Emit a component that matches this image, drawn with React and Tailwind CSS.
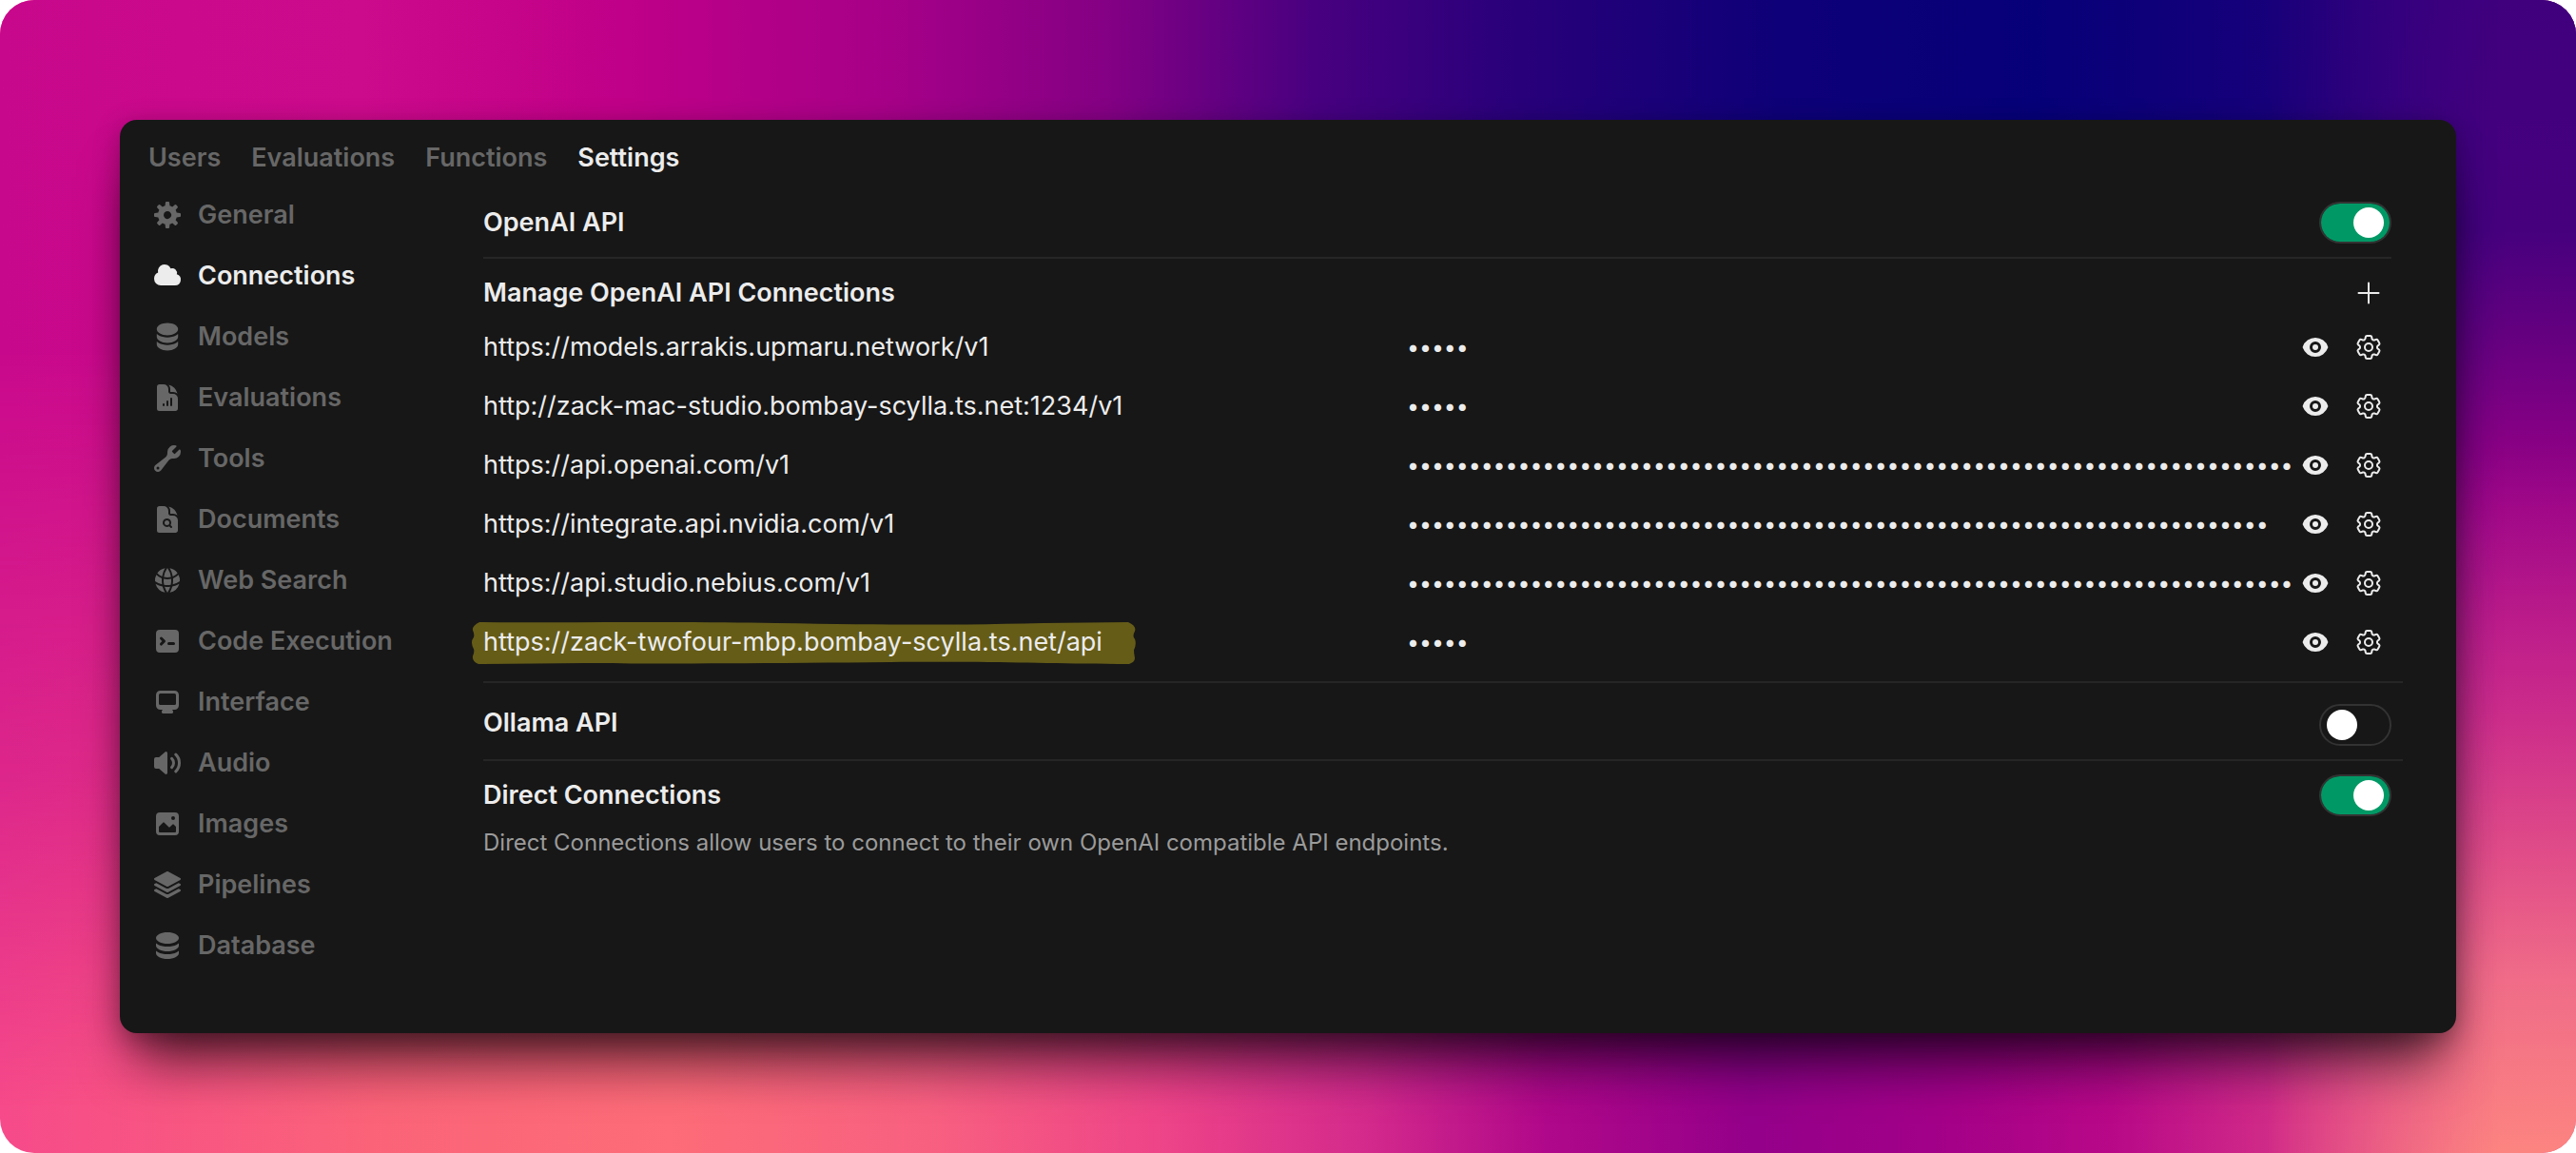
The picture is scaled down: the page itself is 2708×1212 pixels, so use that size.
import React from "react";

function Icon({ children, box = "0 0 24 24", className = "size-8" }) {
  return (
    <svg viewBox={box} fill="currentColor" className={className} aria-hidden="true">
      {children}
    </svg>
  );
}

const CogIcon = () => (
  <Icon box="0 0 16 16">
    <path
      fillRule="evenodd"
      clipRule="evenodd"
      d="M6.955 1.45A.5.5 0 0 1 7.452 1h1.096a.5.5 0 0 1 .497.45l.17 1.699c.484.12.94.312 1.356.562l1.321-1.081a.5.5 0 0 1 .67.033l.774.775a.5.5 0 0 1 .034.67l-1.08 1.32c.25.417.44.873.561 1.357l1.699.17a.5.5 0 0 1 .45.497v1.096a.5.5 0 0 1-.45.497l-1.699.17c-.12.484-.312.94-.562 1.356l1.082 1.322a.5.5 0 0 1-.034.67l-.774.774a.5.5 0 0 1-.67.033l-1.322-1.08c-.416.25-.872.44-1.356.561l-.17 1.699a.5.5 0 0 1-.497.45H7.452a.5.5 0 0 1-.497-.45l-.17-1.699a4.973 4.973 0 0 1-1.356-.562L4.108 13.37a.5.5 0 0 1-.67-.033l-.774-.775a.5.5 0 0 1-.034-.67l1.08-1.32a4.971 4.971 0 0 1-.561-1.357l-1.699-.17A.5.5 0 0 1 1 8.548V7.452a.5.5 0 0 1 .45-.497l1.699-.17c.12-.484.312-.94.562-1.356L2.629 4.107a.5.5 0 0 1 .034-.67l.774-.774a.5.5 0 0 1 .67-.033L5.43 3.71a4.97 4.97 0 0 1 1.356-.561l.17-1.699ZM6 8c0 .538.212 1.026.558 1.385l.057.057a2 2 0 0 0 2.828-2.828l-.058-.056A2 2 0 0 0 6 8Z"
    />
  </Icon>
);

const CloudIcon = () => (
  <Icon box="0 0 16 16">
    <path d="M1 9.5A3.5 3.5 0 0 0 4.5 13H12a3 3 0 0 0 .917-5.857 2.503 2.503 0 0 0-3.198-3.019 3.5 3.5 0 0 0-6.628 2.171A3.5 3.5 0 0 0 1 9.5Z" />
  </Icon>
);

const StackIcon = () => (
  <Icon box="0 0 20 20">
    <path
      fillRule="evenodd"
      clipRule="evenodd"
      d="M10 1c3.866 0 7 1.79 7 4s-3.134 4-7 4-7-1.79-7-4 3.134-4 7-4zm5.694 8.13c.464-.264.91-.583 1.306-.952V10c0 2.21-3.134 4-7 4s-7-1.79-7-4V8.178c.396.37.842.688 1.306.953C5.838 10.006 7.854 10.5 10 10.5s4.162-.494 5.694-1.37zM3 13.179V15c0 2.21 3.134 4 7 4s7-1.79 7-4v-1.822c-.396.37-.842.688-1.306.953-1.532.875-3.548 1.369-5.694 1.369s-4.162-.494-5.694-1.37A7.009 7.009 0 013 13.179z"
    />
  </Icon>
);

const DatabaseIcon = () => (
  <Icon box="0 0 16 16">
    <path d="M8 7c3.314 0 6-1.343 6-3s-2.686-3-6-3-6 1.343-6 3 2.686 3 6 3Z" />
    <path d="M8 8.5c1.84 0 3.579-.37 4.914-1.037A6.33 6.33 0 0 0 14 6.78V8c0 1.657-2.686 3-6 3S2 9.657 2 8V6.78c.346.273.72.5 1.087.683C4.42 8.131 6.16 8.5 8 8.5Z" />
    <path d="M8 12.5c1.84 0 3.579-.37 4.914-1.037.366-.183.74-.41 1.086-.684V12c0 1.657-2.686 3-6 3s-6-1.343-6-3v-1.22c.346.273.72.5 1.087.683C4.42 12.131 6.16 12.5 8 12.5Z" />
  </Icon>
);

const ChartDocIcon = () => (
  <Icon>
    <path
      fillRule="evenodd"
      clipRule="evenodd"
      d="M5.625 1.5H9a3.75 3.75 0 0 1 3.75 3.75v1.875c0 1.036.84 1.875 1.875 1.875H16.5a3.75 3.75 0 0 1 3.75 3.75v7.875c0 1.035-.84 1.875-1.875 1.875H5.625a1.875 1.875 0 0 1-1.875-1.875V3.375c0-1.036.84-1.875 1.875-1.875ZM9.75 17.25a.75.75 0 0 0-1.5 0V18a.75.75 0 0 0 1.5 0v-.75Zm2.25-3a.75.75 0 0 1 .75.75v3a.75.75 0 0 1-1.5 0v-3a.75.75 0 0 1 .75-.75Zm3.75-1.5a.75.75 0 0 0-1.5 0V18a.75.75 0 0 0 1.5 0v-5.25Z"
    />
    <path d="M14.25 5.25a5.23 5.23 0 0 0-1.279-3.434 9.768 9.768 0 0 1 6.963 6.963A5.23 5.23 0 0 0 16.5 7.5h-1.875a.375.375 0 0 1-.375-.375V5.25Z" />
  </Icon>
);

const WrenchIcon = () => (
  <Icon box="0 0 16 16">
    <path
      fillRule="evenodd"
      clipRule="evenodd"
      d="M15 4.5A3.5 3.5 0 0 1 11.435 8c-.99-.019-2.093.132-2.7.913l-4.13 5.31a2.015 2.015 0 1 1-2.827-2.828l5.309-4.13c.78-.607.932-1.71.914-2.7L8 4.5a3.5 3.5 0 0 1 4.477-3.362c.325.094.39.497.15.736L10.6 3.902a.48.48 0 0 0-.033.653c.271.314.565.608.879.879a.48.48 0 0 0 .653-.033l2.027-2.027c.239-.24.642-.175.736.15.09.31.138.637.138.976ZM3.75 13a.75.75 0 1 1-1.5 0 .75.75 0 0 1 1.5 0Z"
    />
  </Icon>
);

const SearchDocIcon = () => (
  <Icon>
    <path d="M11.625 16.5a1.875 1.875 0 1 0 0-3.75 1.875 1.875 0 0 0 0 3.75Z" />
    <path
      fillRule="evenodd"
      clipRule="evenodd"
      d="M5.625 1.5H9a3.75 3.75 0 0 1 3.75 3.75v1.875c0 1.036.84 1.875 1.875 1.875H16.5a3.75 3.75 0 0 1 3.75 3.75v7.875c0 1.035-.84 1.875-1.875 1.875H5.625a1.875 1.875 0 0 1-1.875-1.875V3.375c0-1.036.84-1.875 1.875-1.875Zm6 16.5c.66 0 1.277-.19 1.797-.518l1.048 1.048a.75.75 0 0 0 1.06-1.06l-1.047-1.048A3.375 3.375 0 1 0 11.625 18Z"
    />
    <path d="M14.25 5.25a5.23 5.23 0 0 0-1.279-3.434 9.768 9.768 0 0 1 6.963 6.963A5.23 5.23 0 0 0 16.5 7.5h-1.875a.375.375 0 0 1-.375-.375V5.25Z" />
  </Icon>
);

const GlobeIcon = () => (
  <Icon>
    <path d="M21.721 12.752a9.711 9.711 0 0 0-.945-5.003 12.754 12.754 0 0 1-4.339 2.708 18.991 18.991 0 0 1-.214 4.772 17.165 17.165 0 0 0 5.498-2.477ZM14.634 15.55a17.324 17.324 0 0 0 .332-4.647c-.952.227-1.945.347-2.966.347-1.021 0-2.014-.12-2.966-.347a17.515 17.515 0 0 0 .332 4.647 17.385 17.385 0 0 0 5.268 0ZM9.772 17.119a18.963 18.963 0 0 0 4.456 0A17.182 17.182 0 0 1 12 21.724a17.18 17.18 0 0 1-2.228-4.605ZM7.777 15.23a18.87 18.87 0 0 1-.214-4.774 12.753 12.753 0 0 1-4.34-2.708 9.711 9.711 0 0 0-.944 5.004 17.165 17.165 0 0 0 5.498 2.477ZM21.356 14.752a9.765 9.765 0 0 1-7.478 6.817 18.64 18.64 0 0 0 1.988-4.718 18.627 18.627 0 0 0 5.49-2.098ZM2.644 14.752c1.682.971 3.53 1.688 5.49 2.099a18.64 18.64 0 0 0 1.988 4.718 9.765 9.765 0 0 1-7.478-6.816ZM13.878 2.43a9.755 9.755 0 0 1 6.116 3.986 11.267 11.267 0 0 1-3.746 2.504 18.63 18.63 0 0 0-2.37-6.49ZM12 2.276a17.152 17.152 0 0 1 2.805 7.121c-.897.23-1.837.353-2.805.353-.968 0-1.908-.122-2.805-.353A17.151 17.151 0 0 1 12 2.276ZM10.122 2.43a18.629 18.629 0 0 0-2.37 6.49 11.266 11.266 0 0 1-3.746-2.504 9.754 9.754 0 0 1 6.116-3.985Z" />
  </Icon>
);

const CommandIcon = () => (
  <Icon box="0 0 16 16">
    <path
      fillRule="evenodd"
      clipRule="evenodd"
      d="M2 4a2 2 0 0 1 2-2h8a2 2 0 0 1 2 2v8a2 2 0 0 1-2 2H4a2 2 0 0 1-2-2V4Zm2.22 1.97a.75.75 0 0 0 0 1.06l.97.97-.97.97a.75.75 0 1 0 1.06 1.06l1.5-1.5a.75.75 0 0 0 0-1.06l-1.5-1.5a.75.75 0 0 0-1.06 0ZM8.75 8.5a.75.75 0 0 0 0 1.5h2.5a.75.75 0 0 0 0-1.5h-2.5Z"
    />
  </Icon>
);

const MonitorIcon = () => (
  <Icon box="0 0 16 16">
    <path
      fillRule="evenodd"
      clipRule="evenodd"
      d="M2 4.25A2.25 2.25 0 0 1 4.25 2h7.5A2.25 2.25 0 0 1 14 4.25v5.5A2.25 2.25 0 0 1 11.75 12h-1.312c.1.128.21.248.328.36a.75.75 0 0 1 .234.545v.345a.75.75 0 0 1-.75.75h-4.5a.75.75 0 0 1-.75-.75v-.345a.75.75 0 0 1 .234-.545c.118-.111.228-.232.328-.36H4.25A2.25 2.25 0 0 1 2 9.75v-5.5Zm2.25-.75a.75.75 0 0 0-.75.75v4.5c0 .414.336.75.75.75h7.5a.75.75 0 0 0 .75-.75v-4.5a.75.75 0 0 0-.75-.75h-7.5Z"
    />
  </Icon>
);

const SpeakerIcon = () => (
  <Icon box="0 0 16 16">
    <path d="M7.557 2.066A.75.75 0 0 1 8 2.75v10.5a.75.75 0 0 1-1.248.56L3.59 11H2a1 1 0 0 1-1-1V6a1 1 0 0 1 1-1h1.59l3.162-2.81a.75.75 0 0 1 .805-.124ZM12.95 3.05a.75.75 0 1 0-1.06 1.06 5.5 5.5 0 0 1 0 7.78.75.75 0 1 0 1.06 1.06 7 7 0 0 0 0-9.9Z" />
    <path d="M10.828 5.172a.75.75 0 1 0-1.06 1.06 2.5 2.5 0 0 1 0 3.536.75.75 0 1 0 1.06 1.06 4 4 0 0 0 0-5.656Z" />
  </Icon>
);

const PhotoIcon = () => (
  <Icon box="0 0 16 16">
    <path
      fillRule="evenodd"
      clipRule="evenodd"
      d="M2 4a2 2 0 0 1 2-2h8a2 2 0 0 1 2 2v8a2 2 0 0 1-2 2H4a2 2 0 0 1-2-2V4Zm10.5 5.707a.5.5 0 0 0-.146-.353l-1-1a.5.5 0 0 0-.708 0L9.354 9.646a.5.5 0 0 1-.708 0L6.354 7.354a.5.5 0 0 0-.708 0l-2 2a.5.5 0 0 0-.146.353V12a.5.5 0 0 0 .5.5h8a.5.5 0 0 0 .5-.5V9.707ZM12 5a1 1 0 1 1-2 0 1 1 0 0 1 2 0Z"
    />
  </Icon>
);

const LayersIcon = () => (
  <Icon>
    <path d="M11.644 1.59a.75.75 0 0 1 .712 0l9.75 5.25a.75.75 0 0 1 0 1.32l-9.75 5.25a.75.75 0 0 1-.712 0l-9.75-5.25a.75.75 0 0 1 0-1.32l9.75-5.25Z" />
    <path d="m3.265 10.602 7.668 4.129a2.25 2.25 0 0 0 2.134 0l7.668-4.13 1.37.739a.75.75 0 0 1 0 1.32l-9.75 5.25a.75.75 0 0 1-.71 0l-9.75-5.25a.75.75 0 0 1 0-1.32l1.37-.738Z" />
    <path d="m10.933 19.231-7.668-4.13-1.37.739a.75.75 0 0 0 0 1.32l9.75 5.25c.221.12.489.12.71 0l9.75-5.25a.75.75 0 0 0 0-1.32l-1.37-.738-7.668 4.13a2.25 2.25 0 0 1-2.134-.001Z" />
  </Icon>
);

const PlusIcon = () => (
  <Icon box="0 0 16 16">
    <path d="M8.5 2.75a.5.5 0 0 0-1 0V7.5H2.75a.5.5 0 0 0 0 1H7.5v4.75a.5.5 0 0 0 1 0V8.5h4.75a.5.5 0 0 0 0-1H8.5V2.75Z" />
  </Icon>
);

const EyeIcon = () => (
  <Icon box="0 0 16 16">
    <path d="M8 9.5a1.5 1.5 0 1 0 0-3 1.5 1.5 0 0 0 0 3Z" />
    <path
      fillRule="evenodd"
      clipRule="evenodd"
      d="M1.38 8.28a.87.87 0 0 1 0-.566 7.003 7.003 0 0 1 13.238.006.87.87 0 0 1 0 .566A7.003 7.003 0 0 1 1.379 8.28ZM11 8a3 3 0 1 1-6 0 3 3 0 0 1 6 0Z"
    />
  </Icon>
);

const GearIcon = () => (
  <svg viewBox="0 0 24 24" fill="none" stroke="currentColor" strokeWidth="1.5" strokeLinecap="round" strokeLinejoin="round" className="size-8" aria-hidden="true">
    <path d="M9.594 3.94c.09-.542.56-.94 1.11-.94h2.593c.55 0 1.02.398 1.11.94l.213 1.281c.063.374.313.686.645.87.074.04.147.083.22.127.325.196.72.257 1.075.124l1.217-.456a1.125 1.125 0 0 1 1.37.49l1.296 2.247a1.125 1.125 0 0 1-.26 1.431l-1.003.827c-.293.241-.438.613-.43.992a7.723 7.723 0 0 1 0 .255c-.008.378.137.75.43.991l1.004.827c.424.35.534.955.26 1.43l-1.298 2.247a1.125 1.125 0 0 1-1.369.491l-1.217-.456c-.355-.133-.75-.072-1.076.124a6.47 6.47 0 0 1-.22.128c-.331.183-.581.495-.644.869l-.213 1.281c-.09.543-.56.94-1.11.94h-2.594c-.55 0-1.019-.398-1.11-.94l-.213-1.281c-.062-.374-.312-.686-.644-.87a6.52 6.52 0 0 1-.22-.127c-.325-.196-.72-.257-1.076-.124l-1.217.456a1.125 1.125 0 0 1-1.369-.49l-1.297-2.247a1.125 1.125 0 0 1 .26-1.431l1.004-.827c.292-.24.437-.613.43-.991a6.932 6.932 0 0 1 0-.255c.007-.38-.138-.751-.43-.992l-1.004-.827a1.125 1.125 0 0 1-.26-1.43l1.297-2.247a1.125 1.125 0 0 1 1.37-.491l1.216.456c.356.133.751.072 1.076-.124.072-.044.146-.086.22-.128.332-.183.582-.495.644-.869l.214-1.28Z" />
    <path d="M15 12a3 3 0 1 1-6 0 3 3 0 0 1 6 0Z" />
  </svg>
);

const TABS = ["Users", "Evaluations", "Functions", "Settings"];

const NAV = [
  ["General", CogIcon],
  ["Connections", CloudIcon],
  ["Models", StackIcon],
  ["Evaluations", ChartDocIcon],
  ["Tools", WrenchIcon],
  ["Documents", SearchDocIcon],
  ["Web Search", GlobeIcon],
  ["Code Execution", CommandIcon],
  ["Interface", MonitorIcon],
  ["Audio", SpeakerIcon],
  ["Images", PhotoIcon],
  ["Pipelines", LayersIcon],
  ["Database", DatabaseIcon],
];

const CONNECTIONS = [
  { url: "https://models.arrakis.upmaru.network/v1", keyLength: 5 },
  { url: "http://zack-mac-studio.bombay-scylla.ts.net:1234/v1", keyLength: 5 },
  { url: "https://api.openai.com/v1", keyLength: 72 },
  { url: "https://integrate.api.nvidia.com/v1", keyLength: 70 },
  { url: "https://api.studio.nebius.com/v1", keyLength: 72 },
  { url: "https://zack-twofour-mbp.bombay-scylla.ts.net/api", keyLength: 5, marked: true },
];

function Toggle({ id, on }) {
  return (
    <span className="flex h-11 w-[76px] shrink-0 rounded-full border-2 border-[#333333]">
      <input
        id={id}
        type="checkbox"
        role="switch"
        defaultChecked={on}
        className="h-full w-full cursor-pointer appearance-none rounded-full p-1 before:block before:size-8 before:translate-x-0.5 before:rounded-full before:bg-white checked:bg-[#009966] checked:before:translate-x-[30px]"
      />
    </span>
  );
}

function Marker() {
  return (
    <svg viewBox="0 0 698 42" preserveAspectRatio="none" className="pointer-events-none absolute top-0 -left-3 h-11 w-[698px]" aria-hidden="true">
      <path
        fill="#655c18"
        d="M8 0 C120 1 200 -1 320 1 S520 3 600 1 L690 0 Q699 4 697 9 Q694 14 697 17 Q699 22 696 28 Q696 32 697 36 Q697 40 691 42 C600 42 560 39 440 40 S200 42 120 41 L7 42 Q0 39 1 34 Q3 30 2 27 Q-2 20 2 15 Q3 12 1 8 Q0 4 8 0Z"
      />
    </svg>
  );
}

function Connection({ url, keyLength, marked }) {
  return (
    <li className="flex h-[62px] items-center gap-4">
      <div className="grid min-w-0 flex-1 grid-cols-2">
        <div className="relative flex h-[42px] items-center">
          {marked && <Marker />}
          <input type="text" aria-label="API base URL" defaultValue={url} className="relative w-full bg-transparent outline-none" />
        </div>
        <div className="flex items-center">
          <input
            type="password"
            aria-label={"API key for " + url}
            defaultValue={"x".repeat(keyLength)}
            className="min-w-0 flex-1 bg-transparent text-[23px] outline-none"
          />
          <button type="button" aria-label="Show key" className="shrink-0">
            <EyeIcon />
          </button>
        </div>
      </div>
      <button type="button" aria-label="Configure connection" className="p-2">
        <GearIcon />
      </button>
    </li>
  );
}

export default function App() {
  return (
    <div className="min-h-screen bg-white">
      <div className="relative isolate min-h-screen overflow-hidden rounded-[36px] bg-[linear-gradient(to_right,#f64a8a,#fb6478_15%,#fd6c78_26%,#f86080_36%,#ee4488_45%,#d42a8c_53%,#b0088a_60%,#94008a_68%,#a20088_75%,#b80888_82%,#d43088_89%,#ec5888)] p-[126px] font-['Inter',sans-serif] text-[27px] leading-10 text-[#ececec]">
        <div className="absolute inset-0 -z-10 bg-[linear-gradient(to_right,#c8088c,#cc0a8c_14%,#c00088_24%,#a80088_34%,#840084_43%,#480080_51%,#28007a_59%,#0e0078_69%,#060078_79%,#14007a_87%,#380080)] [mask-image:linear-gradient(to_bottom,black_30%,#0008_68%,transparent_96%)]" />
        <div className="absolute inset-0 -z-10 bg-[linear-gradient(to_bottom,#40007e,#46007e_20%,#640080_29%,#860084_38%,#a00888_44%,#bc1c8a_54%,#cc2c8a_62%,#e04c88_74%,#f06c88_85%,#fc8480)] [mask-image:linear-gradient(to_right,transparent_88%,black_97%)]" />
        <main className="min-h-[960px] rounded-[18px] bg-[#171717] pt-5 pb-10 shadow-[0_44px_56px_-16px_rgba(0,0,0,0.65),0_6px_28px_rgba(0,0,0,0.3)]">
          <nav aria-label="Admin" className="flex gap-8 px-[30px] font-semibold">
            {TABS.map((t) => (
              <a key={t} href={"#" + t.toLowerCase()} className={t === "Settings" ? "" : "text-[#676767]"}>
                {t}
              </a>
            ))}
          </nav>
          <div className="flex pt-2 pr-14">
            <nav aria-label="Settings" className="w-[348px] shrink-0 px-[34px] font-semibold">
              {NAV.map(([label, Glyph]) => (
                <a
                  key={label}
                  href={"#" + label.toLowerCase().replace(" ", "-")}
                  className={
                    "flex h-16 items-center gap-4 whitespace-nowrap " + (label === "Connections" ? "" : "text-[#676767]")
                  }
                >
                  <Glyph />
                  {label}
                </a>
              ))}
            </nav>
            <form className="flex min-w-0 flex-1 flex-col pt-[18px] pl-[34px]">
              <section className="pr-3">
                <div className="flex h-11 items-center justify-between">
                  <label htmlFor="openai" className="font-semibold">OpenAI API</label>
                  <Toggle id="openai" on />
                </div>
                <hr className="mt-3.5 border-t-2 border-[#262626]" />
                <div className="mt-3 flex h-12 items-center justify-between">
                  <h2 className="font-semibold">Manage OpenAI API Connections</h2>
                  <button type="button" aria-label="Add connection" className="p-2">
                    <PlusIcon />
                  </button>
                </div>
                <ul className="mt-0.5">
                  {CONNECTIONS.map((c) => (
                    <Connection key={c.url} {...c} />
                  ))}
                </ul>
              </section>
              <hr className="mt-2.5 border-t-2 border-[#262626]" />
              <section className="flex h-20 items-start justify-between pt-[22px] pr-3">
                <label htmlFor="ollama" className="font-semibold">Ollama API</label>
                <Toggle id="ollama" />
              </section>
              <hr className="border-t-2 border-[#262626]" />
              <section className="pt-3.5 pr-3">
                <div className="flex h-11 items-center justify-between">
                  <label htmlFor="direct" className="font-semibold">Direct Connections</label>
                  <Toggle id="direct" on />
                </div>
                <p className="mt-2 text-2xl leading-10 text-[#9b9b9b]">
                  Direct Connections allow users to connect to their own OpenAI compatible API endpoints.
                </p>
              </section>
            </form>
          </div>
        </main>
      </div>
    </div>
  );
}
